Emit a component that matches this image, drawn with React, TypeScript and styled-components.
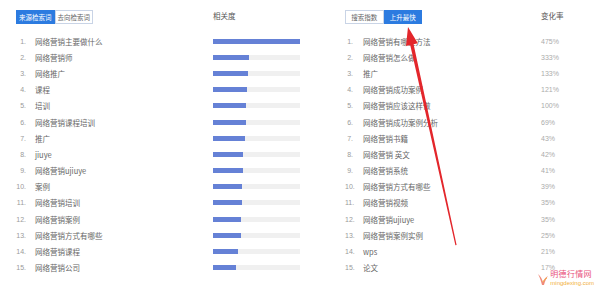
import React from 'react';
import styled, { createGlobalStyle } from 'styled-components';

const GlobalStyle = createGlobalStyle`
  * {
    box-sizing: border-box;
  }
  body {
    margin: 0;
    background: #fff;
    font-family: 'Liberation Sans', 'Noto Sans CJK SC', sans-serif;
  }
`;

const sources = [
  { word: '网络营销主要做什么', value: 87 },
  { word: '网络营销师', value: 36 },
  { word: '网络推广', value: 35 },
  { word: '课程', value: 34 },
  { word: '培训', value: 33 },
  { word: '网络营销课程培训', value: 33 },
  { word: '推广', value: 32 },
  { word: 'jiuye', value: 30 },
  { word: '网络营销ujiuye', value: 30 },
  { word: '案例', value: 29 },
  { word: '网络营销培训', value: 29 },
  { word: '网络营销案例', value: 28 },
  { word: '网络营销方式有哪些', value: 28 },
  { word: '网络营销课程', value: 25 },
  { word: '网络营销公司', value: 23 },
];

const rising = [
  { word: '网络营销有哪些方法', rate: '475%' },
  { word: '网络营销怎么做', rate: '333%' },
  { word: '推广', rate: '133%' },
  { word: '网络营销成功案例', rate: '121%' },
  { word: '网络营销应该这样做', rate: '100%' },
  { word: '网络营销成功案例分析', rate: '69%' },
  { word: '网络营销书籍', rate: '43%' },
  { word: '网络营销 英文', rate: '42%' },
  { word: '网络营销系统', rate: '41%' },
  { word: '网络营销方式有哪些', rate: '39%' },
  { word: '网络营销视频', rate: '35%' },
  { word: '网络营销ujiuye', rate: '35%' },
  { word: '网络营销案例实例', rate: '25%' },
  { word: 'wps', rate: '21%' },
  { word: '论文', rate: '17%' },
];

const MAX = 87;

function App() {
  return (
    <>
      <GlobalStyle />
      <Page>
        <Panel $cols="19px 178px 87px" $numPad={9}>
          <Header>
            <Tab $active>来源检索词</Tab>
            <Tab>去向检索词</Tab>
          </Header>
          <ColTitle>相关度</ColTitle>
          {sources.map((item, i) => (
            <React.Fragment key={item.word}>
              <Num $pad={9}>{i + 1}.</Num>
              <Word>{item.word}</Word>
              <Track>
                <Fill style={{ width: `${(item.value / MAX) * 100}%` }} />
              </Track>
            </React.Fragment>
          ))}
        </Panel>
        <Panel $cols="18px 178px auto" $numPad={10}>
          <Header>
            <Tab>搜索指数</Tab>
            <Tab $active>上升最快</Tab>
          </Header>
          <ColTitle>变化率</ColTitle>
          {rising.map((item, i) => (
            <React.Fragment key={item.word}>
              <Num $pad={10}>{i + 1}.</Num>
              <Word>{item.word}</Word>
              <Rate>{item.rate}</Rate>
            </React.Fragment>
          ))}
        </Panel>
        <Arrow width="600" height="288" viewBox="0 0 600 288">
          <polygon
            points="408,27 417.8,43.3 413.6,44.2 456.6,245 455.4,245.2 410.2,45 406,45.9"
            fill="#e3262b"
          />
        </Arrow>
        <Watermark>
          <svg width="12" height="14" viewBox="0 0 12 14">
            <path d="M1 2 C4 5 5 7 6 10 C7 7 9 5 11 4 C9 7 8 9 7 13 L5 13 C4 9 3 6 1 2 Z" fill="#f08a7a" />
            <path d="M6 10 C7 8 8 7 10 6" stroke="#f5b040" strokeWidth="1" fill="none" />
          </svg>
          <MarkText>
            <MarkName>明德行情网</MarkName>
            <MarkUrl>mingdexing.com</MarkUrl>
          </MarkText>
        </Watermark>
      </Page>
    </>
  );
}

const Page = styled.div`
  position: relative;
  width: 600px;
  height: 288px;
  overflow: hidden;
  padding: 10px 0 0 16px;
  display: grid;
  grid-template-columns: 329px 1fr;
  align-items: start;
`;

const Panel = styled.div<{ $cols: string; $numPad: number }>`
  display: grid;
  grid-template-columns: ${({ $cols }) => $cols};
  grid-template-rows: 23px;
  grid-auto-rows: 16.2px;
  align-items: center;
`;

const Header = styled.div`
  grid-column: 1 / 3;
  align-self: start;
  height: 14px;
  display: flex;
`;

const Tab = styled.div<{ $active?: boolean }>`
  width: 38.5px;
  height: 14px;
  display: flex;
  align-items: center;
  justify-content: center;
  font-size: 6.5px;
  color: ${({ $active }) => ($active ? '#fff' : '#666')};
  background: ${({ $active }) => ($active ? '#2c7be0' : '#fff')};
  border: 1px solid ${({ $active }) => ($active ? '#2c7be0' : '#c9d4e6')};
`;

const ColTitle = styled.div`
  align-self: start;
  font-size: 7.5px;
  color: #555;
  height: 14px;
  line-height: 14px;
`;

const Num = styled.div<{ $pad: number }>`
  font-size: 7px;
  color: #9a9a9a;
  text-align: right;
  padding-right: ${({ $pad }) => $pad}px;
`;

const Word = styled.div`
  font-family: 'Noto Sans CJK SC', 'Liberation Sans', sans-serif;
  font-size: 7.5px;
  color: #666;
  white-space: nowrap;
`;

const Track = styled.div`
  height: 5px;
  background: #f0f0f0;
`;

const Fill = styled.div`
  height: 100%;
  background: #6581d6;
`;

const Rate = styled.div`
  font-size: 7px;
  color: #ababab;
`;

const Arrow = styled.svg`
  position: absolute;
  left: 0;
  top: 0;
  pointer-events: none;
`;

const Watermark = styled.div`
  position: absolute;
  right: 6px;
  bottom: 2px;
  display: flex;
  align-items: center;
  gap: 1px;
`;

const MarkText = styled.div`
  display: flex;
  flex-direction: column;
  line-height: 1;
`;

const MarkName = styled.span`
  font-size: 8px;
  color: #e8507a;
  letter-spacing: 0.3px;
`;

const MarkUrl = styled.span`
  font-size: 6px;
  color: #f2b03a;
  margin-top: 1px;
`;

export default App;
